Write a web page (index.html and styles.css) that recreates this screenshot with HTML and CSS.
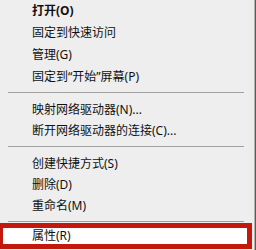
FILE: index.html
```html
<!DOCTYPE html>
<html lang="zh-CN">
<head>
    <meta charset="UTF-8">
    <title>右键菜单</title>
    <link rel="stylesheet" href="styles.css">
</head>
<body>
    <div class="menu">
        <div class="menu-group menu-group-top">
            <div class="menu-item menu-item-default">打开(O)</div>
            <div class="menu-item">固定到快速访问</div>
            <div class="menu-item">管理(G)</div>
            <div class="menu-item">固定到“开始”屏幕(P)</div>
        </div>
        <div class="menu-sep menu-sep-first"></div>
        <div class="menu-group">
            <div class="menu-item">映射网络驱动器(N)...</div>
            <div class="menu-item">断开网络驱动器的连接(C)...</div>
        </div>
        <div class="menu-sep"></div>
        <div class="menu-group">
            <div class="menu-item">创建快捷方式(S)</div>
            <div class="menu-item">删除(D)</div>
            <div class="menu-item">重命名(M)</div>
        </div>
        <div class="menu-sep menu-sep-last"></div>
        <div class="menu-item menu-item-marked">属性(R)</div>
    </div>
</body>
</html>
```

FILE: styles.css
```css
/* 基本 */
body {
    margin: 0;
    background-color: #eeeeee;
    font-family: "Noto Sans", "Noto Sans CJK SC", sans-serif;
    color: #111;
}

/* --- 右键菜单 --- */
.menu {
    width: 254px;
    height: 250px;
    background-color: #eeeeee;
    border-right: 1px solid #b4b4ac;
    box-shadow: 1px 0 0 #5c5c50;
    overflow: hidden;
}
.menu-item {
    height: 21px;
    line-height: 21px;
    padding-left: 32px;
    font-size: 12px;
    white-space: nowrap;
}
.menu-group-top .menu-item {
    height: 22px;
    line-height: 22px;
}
.menu-item-default { font-weight: 700; }

.menu-sep {
    height: 1px;
    margin: 5px 10px 6px 8px;
    background-color: #a0a0a0;
}
.menu-sep-first { margin-top: 4px; }
.menu-sep-last { margin-bottom: 1px; }

/* 赤枠で囲まれた項目 */
.menu-item-marked {
    height: 16px;
    line-height: 16px;
    padding-left: 29px;
    margin-right: 2px;
    background-color: #ffffff;
    border: 5px solid #c2180e;
    border-left-width: 3px;
}
```
